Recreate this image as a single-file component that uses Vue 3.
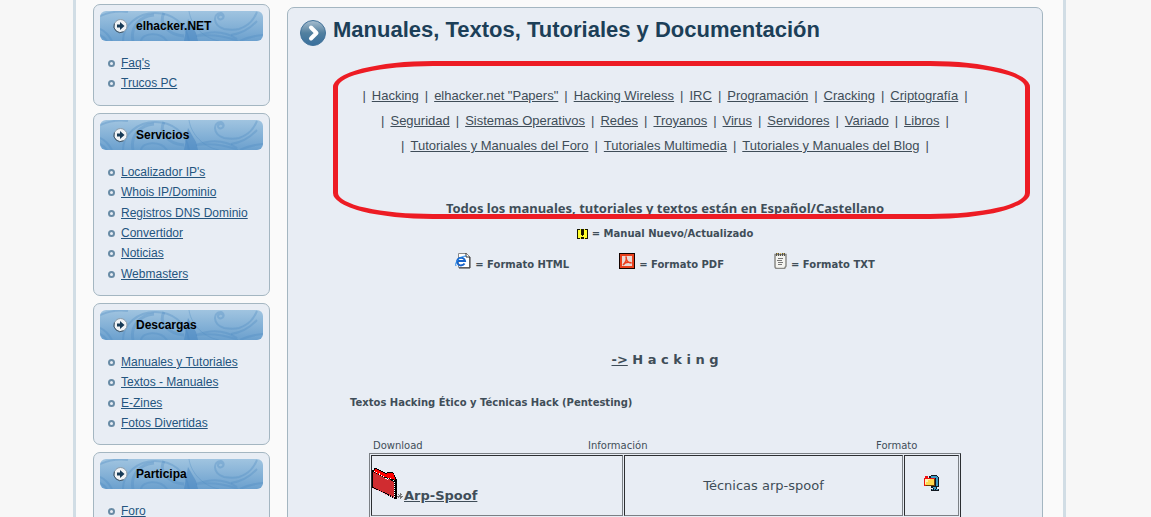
<script setup>
const menus = [
  { title: 'elhacker.NET', links: ["Faq's", 'Trucos PC'] },
  {
    title: 'Servicios',
    links: ["Localizador IP's", 'Whois IP/Dominio', 'Registros DNS Dominio', 'Convertidor', 'Noticias', 'Webmasters'],
  },
  { title: 'Descargas', links: ['Manuales y Tutoriales', 'Textos - Manuales', 'E-Zines', 'Fotos Divertidas'] },
  { title: 'Participa', links: ['Foro'] },
]

const topics = [
  ['Hacking', 'elhacker.net "Papers"', 'Hacking Wireless', 'IRC', 'Programación', 'Cracking', 'Criptografía'],
  ['Seguridad', 'Sistemas Operativos', 'Redes', 'Troyanos', 'Virus', 'Servidores', 'Variado', 'Libros'],
  ['Tutoriales y Manuales del Foro', 'Tutoriales Multimedia', 'Tutoriales y Manuales del Blog'],
]
</script>

<template>
  <div class="page">
    <div class="site">
      <aside class="sidebar">
        <nav v-for="menu in menus" :key="menu.title" class="panel menu">
          <h2 class="menu-title">
            <svg class="swirls" viewBox="0 0 163 30" preserveAspectRatio="none" aria-hidden="true">
              <defs>
                <linearGradient id="pill" x1="0" y1="0" x2="0" y2="1">
                  <stop offset="0" stop-color="#a0c4e0" />
                  <stop offset="1" stop-color="#6ba0ce" />
                </linearGradient>
              </defs>
              <rect width="163" height="30" fill="url(#pill)" />
              <g fill="none" stroke="#4f8bc4" stroke-opacity="0.35">
                <path d="M0 18Q7 21 12 30M0 24Q4 26 7 30M0 5Q14 -1 28 1" stroke-width="2" />
                <path d="M23 30C23 14 38 2 55 2C72 2 86 12 89 30" stroke-width="2" />
                <path d="M33 30C30 16 40 5 54 4" stroke-width="3" />
                <path d="M64 2C58 12 68 24 84 25" stroke-width="3" />
                <path d="M41 30C42 22 60 20 67 30" stroke-width="2" />
                <path d="M89 0C91 14 103 27 119 30" stroke-width="1" />
                <path d="M96 25C112 19 125 20 137 28M96 25C112 23 128 26 138 30" stroke-width="2" />
                <path d="M123 5C120 2 116 6 119 8C123 10 126 4 121 2C113 2 112 14 124 18C130 19 135 19 139 18C150 14 154 8 157 1" stroke-width="2" />
                <path d="M131 24Q146 22 157 10M140 30Q150 25 163 24" stroke-width="2" />
              </g>
              <path d="M88 8L96 22L98 30H84Z" fill="#4684c0" fill-opacity="0.5" />
            </svg>
            <svg class="bullet" viewBox="0 0 16 16" aria-hidden="true">
              <circle cx="7.5" cy="8" r="6.5" fill="#f1f3f5" stroke="#8b9ba8" />
              <path d="M1.400 5.500A6.500 6.500 0 0 0 10.500 13.800" fill="none" stroke="#3c566c" />
              <path d="M4 6.5H7V4L11.500 8L7 12V9.5H4Z" fill="#173a56" />
            </svg>
            <span>{{ menu.title }}</span>
          </h2>
          <ul>
            <li v-for="link in menu.links" :key="link"><a href="#">{{ link }}</a></li>
          </ul>
        </nav>
      </aside>

      <main class="panel content">
        <h1>
          <svg class="title-icon" viewBox="0 0 26 26" aria-hidden="true">
            <defs>
              <linearGradient id="disc" x1="0" y1="0" x2="0" y2="1">
                <stop offset="0" stop-color="#a9bfd0" />
                <stop offset="0.5" stop-color="#52809f" />
                <stop offset="1" stop-color="#386f9d" />
              </linearGradient>
            </defs>
            <circle cx="13" cy="13" r="12.5" fill="url(#disc)" stroke="#43739a" />
            <path d="M11 7.5L16.5 13L11 18.5" fill="none" stroke="#fff" stroke-width="4" stroke-linecap="round" stroke-linejoin="round" />
          </svg>
          <span>Manuales, Textos, Tutoriales y Documentación</span>
        </h1>

        <div class="marker" aria-hidden="true"></div>

        <nav class="topics">
          <p v-for="(row, i) in topics" :key="i">
            <span class="bar">|</span>
            <template v-for="topic in row" :key="topic"><a href="#">{{ topic }}</a><span class="bar">|</span></template>
          </p>
        </nav>

        <p class="notice">Todos los manuales, tutoriales y textos están en Español/Castellano</p>

        <div class="legend">
          <p>
            <svg width="11" height="10" viewBox="0 0 11 10" shape-rendering="crispEdges" aria-hidden="true">
              <rect width="11" height="10" fill="#ffff2b" />
              <path d="M0 0H3V1H1V9H3V10H0ZM11 0H8V1H10V9H8V10H11ZM4 0H7V6H6V7H5V6H4ZM4 8H7V10H4Z" fill="#171700" />
            </svg>
            <span>= Manual Nuevo/Actualizado</span>
          </p>
        </div>
        <div class="legend formats">
          <p>
            <svg width="16" height="16" viewBox="0 0 16 16" aria-hidden="true">
              <path d="M3.5 .5H11.5L14.5 3.5V14.5H3.5Z" fill="#fff" stroke="#8b8b8b" />
              <path d="M11 0V4H15M15 4V15H4" fill="none" stroke="#333" />
              <path d="M9.5 10.5A4 3.8 0 1 1 10 8H3" fill="none" stroke="#1763c9" stroke-width="2" />
              <path d="M1 13C-1 10 5 3 11 3" fill="none" stroke="#2086e8" />
            </svg>
            <span>= Formato HTML</span>
          </p>
          <p>
            <svg width="16" height="16" viewBox="0 0 16 16" aria-hidden="true">
              <rect width="16" height="16" fill="#140300" />
              <rect x="1" y="1" width="14" height="14" fill="#e8401c" />
              <rect x="3" y="3" width="10" height="10" fill="#e9d9d5" />
              <path d="M4 12C7 9 8 6 7 3.5C7 7 9 10 12.5 10C9 8.500 6 9.500 4 12" fill="none" stroke="#ec3d1d" stroke-width="1.500" />
            </svg>
            <span>= Formato PDF</span>
          </p>
          <p>
            <svg width="13" height="16" viewBox="0 0 13 16" aria-hidden="true">
              <path d="M1 1.500H12V13L10.500 15.500H2L1 14Z" fill="#f4f4f0" stroke="#8a8a86" stroke-width="1.500" />
              <path d="M2 1.500H11" stroke="#55534a" stroke-width="3" stroke-dasharray="1 1" />
              <path d="M3 0.500H10" stroke="#d6b54a" stroke-dasharray="1 2" />
              <path d="M4 5.500H9M3 7.500H8M4 9.500H9M4 11.500H8" stroke="#777" />
            </svg>
            <span>= Formato TXT</span>
          </p>
        </div>

        <h2 class="section"><a href="#">-&gt;</a> H a c k i n g</h2>
        <h3>Textos Hacking Ético y Técnicas Hack (Pentesting)</h3>

        <div class="downloads">
          <div class="labels">
            <span id="col-download">Download</span>
            <span id="col-info">Información</span>
            <span id="col-format">Formato</span>
          </div>
          <table>
            <colgroup><col class="c-file" /><col class="c-info" /><col class="c-format" /></colgroup>
            <tbody>
              <tr>
                <td class="raised" headers="col-download">
                  <div class="file">
                    <svg width="31" height="32" viewBox="0 0 31 32" shape-rendering="crispEdges" aria-hidden="true">
                      <path d="M0 2H2V0H5V1H7V2H9V3H11V4H13V5H15V4H21V5H22V7H23V9H24V11H25V31H22V30H20V29H18V28H16V27H14V26H12V25H10V24H8V23H6V22H4V21H2V20H0Z" fill="#000" />
                      <path d="M2 2L4 1L14 6L16 5H20L22 7L23 10V12L17 10L13 9L2 4Z" fill="#f00" />
                      <path d="M1 4L13 10L15 12L17 11L22 14V29L1 19Z" fill="#d02c30" />
                      <path d="M2 3L13 9L15 12L17 10L22 13V29" fill="none" stroke="#fff" stroke-dasharray="1 1" />
                      <path d="M1 20L22 30" fill="none" stroke="#ff9eb4" stroke-dasharray="1 1" />
                      <path d="M25 28H31M26 26L30 30M30 26L26 30M28 25V31" stroke="#777" />
                    </svg>
                    <a href="#">Arp-Spoof</a>
                  </div>
                </td>
                <td headers="col-info">Técnicas arp-spoof</td>
                <td class="raised" headers="col-format">
                  <svg class="zip" width="16" height="17" viewBox="0 0 16 17" shape-rendering="crispEdges" aria-hidden="true">
                    <path d="M5 1H7V0H13V1H14V2H15V12H13V14H15V16H7V14H9V13H7V11H11V4H5Z" fill="#101820" />
                    <path d="M7 1H13V2H14V11H12V3H7ZM9 12H12V13H9ZM8 15H9V14H10V15H11V14H12V15H14V14H12V13H10V14H8Z" fill="#3d9bc4" />
                    <path d="M0 3H1V1H4V3H11V11H0Z" fill="#e11" />
                    <path d="M1 4H10V10H1Z" fill="#ffd84d" />
                    <path d="M1 4H6V5H4V7H2V9H1Z" fill="#fff3ae" />
                    <path d="M10 4H11V11H2V10H10Z" fill="#6b3d00" />
                  </svg>
                </td>
              </tr>
            </tbody>
          </table>
        </div>
      </main>
    </div>
  </div>
</template>

<style>
body {
  background: #f7f7f7;
}
</style>

<style scoped>
.page {
  height: 100vh;
  overflow: hidden;
  padding-right: 12px;
  color: #3f4d58;
  font-family: "DejaVu Sans", Verdana, sans-serif;
}
h1, h2, h3, p, ul {
  margin: 0;
  padding: 0;
}
a {
  color: inherit;
}
svg {
  flex: none;
}
.site {
  box-sizing: border-box;
  max-width: 993px;
  min-height: 100%;
  margin: 0 auto;
  padding: 4px 20px 0 17px;
  border: solid #d1dde5;
  border-width: 0 3px;
  background: #fafafa;
  display: flex;
  align-items: flex-start;
  gap: 17px;
}
.panel {
  box-sizing: border-box;
  border: 1px solid #a4b6c1;
  border-radius: 7px;
  background: #e8edf4;
}
.sidebar {
  flex: none;
  width: 177px;
  display: flex;
  flex-direction: column;
  gap: 7px;
  font: 12px/20px "Liberation Sans", Arial, sans-serif;
}
.menu {
  padding: 6px 6px 11px;
}
.menu-title {
  position: relative;
  display: flex;
  align-items: center;
  gap: 7px;
  height: 30px;
  padding-left: 13px;
  border-radius: 6px;
  overflow: hidden;
  color: #000;
  font-size: 12px;
}
.swirls {
  position: absolute;
  inset: 0;
  width: 100%;
  height: 100%;
}
.bullet, .menu-title span {
  position: relative;
}
.bullet {
  width: 16px;
  height: 16px;
}
.menu ul {
  margin-top: 12px;
  list-style: none;
}
.menu li {
  display: flex;
  align-items: center;
  gap: 6px;
  padding-left: 8px;
  color: #24557f;
}
.menu li:nth-child(3n + 2) {
  margin-bottom: 1px;
}
.menu li::before {
  content: "";
  box-sizing: border-box;
  width: 7px;
  height: 7px;
  border: 2px solid #688ba5;
  border-radius: 50%;
}
.content {
  position: relative;
  flex: 1;
  min-height: 540px;
  margin-top: 3px;
}
h1 {
  display: flex;
  align-items: flex-start;
  gap: 7px;
  margin: 12px 0 0 12px;
  color: #1c3f58;
  font: bold 22px/20px "Liberation Sans", Arial, sans-serif;
}
.title-icon {
  width: 26px;
  height: 26px;
}
.marker {
  position: absolute;
  top: 53px;
  left: 45px;
  right: 12px;
  height: 148px;
  border: 5px solid #ed1c24;
  border-radius: 100px / 26px;
  pointer-events: none;
}
.topics {
  margin-top: 37px;
  font: 13px/25px "Liberation Sans", Arial, sans-serif;
}
.topics p {
  display: flex;
  justify-content: center;
}
.bar {
  margin: 0 6px;
}
.notice {
  margin-top: 40px;
  text-align: center;
  font: bold 13px/20px "Noto Sans", Tahoma, sans-serif;
}
.legend {
  display: flex;
  justify-content: center;
  gap: 50px;
  margin-top: 6px;
  font-size: 10px;
  font-weight: bold;
  line-height: 20px;
}
.legend p {
  display: flex;
  align-items: center;
  gap: 4px;
}
.formats {
  margin-top: 9px;
  line-height: 8px;
}
.formats p {
  align-items: flex-end;
}
.section {
  margin-top: 81px;
  text-align: center;
  font-size: 13px;
  line-height: 20px;
}
h3 {
  margin: 23px 0 0 62px;
  font-size: 10px;
  line-height: 20px;
}
.downloads {
  margin: 25px 81px 0;
}
.labels {
  display: grid;
  grid-template-columns: 215px 288px auto;
  padding-left: 4px;
  font-size: 10px;
  line-height: 15px;
}
table {
  width: 100%;
  table-layout: fixed;
  border: 1px solid;
  border-color: #7b8085 #2b2e31 #2b2e31 #7b8085;
  border-spacing: 1px;
  font-size: 13px;
}
.c-info {
  width: 279px;
}
.c-format {
  width: 55px;
}
td {
  box-sizing: border-box;
  height: 61px;
  padding: 0;
  border: 1px solid;
  border-color: #2b2e31 #7b8085 #7b8085 #2b2e31;
  text-align: center;
}
.raised {
  padding-bottom: 4px;
}
.file {
  display: flex;
  align-items: flex-end;
  gap: 1px;
  font-weight: bold;
  line-height: 8px;
}
.zip {
  display: block;
  margin: 0 auto;
}
</style>
